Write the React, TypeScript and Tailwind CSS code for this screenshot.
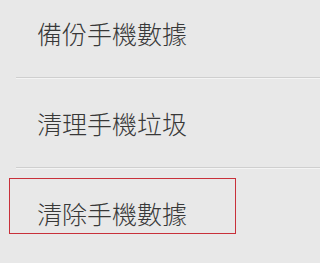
const items = [
  { label: "備份手機數據", selected: false },
  { label: "清理手機垃圾", selected: false },
  { label: "清除手機數據", selected: true },
];

export default function App() {
  return (
    <div className="w-full min-w-[272px] h-[263px] overflow-hidden bg-[#e8e8e8] font-['Noto_Sans_CJK_TC',sans-serif]">
      <div className="-mt-[11px]">
        {items.map((item, i) => (
          <div key={item.label}>
            {i > 0 && <div className="ml-[16px] h-px bg-[#cfcfcf] border-b border-[#f4f4f4] box-content" />}
            <div className="relative h-[88px] flex items-center pl-[37px]">
              {/* focus frame */}
              {item.selected && (
                <div className="absolute left-[9px] top-[9px] w-[227px] h-[56px] border border-[#c8303a]" />
              )}
              <span className="text-[25px] leading-none font-light text-[#383838]">{item.label}</span>
            </div>
          </div>
        ))}
      </div>
    </div>
  );
}
